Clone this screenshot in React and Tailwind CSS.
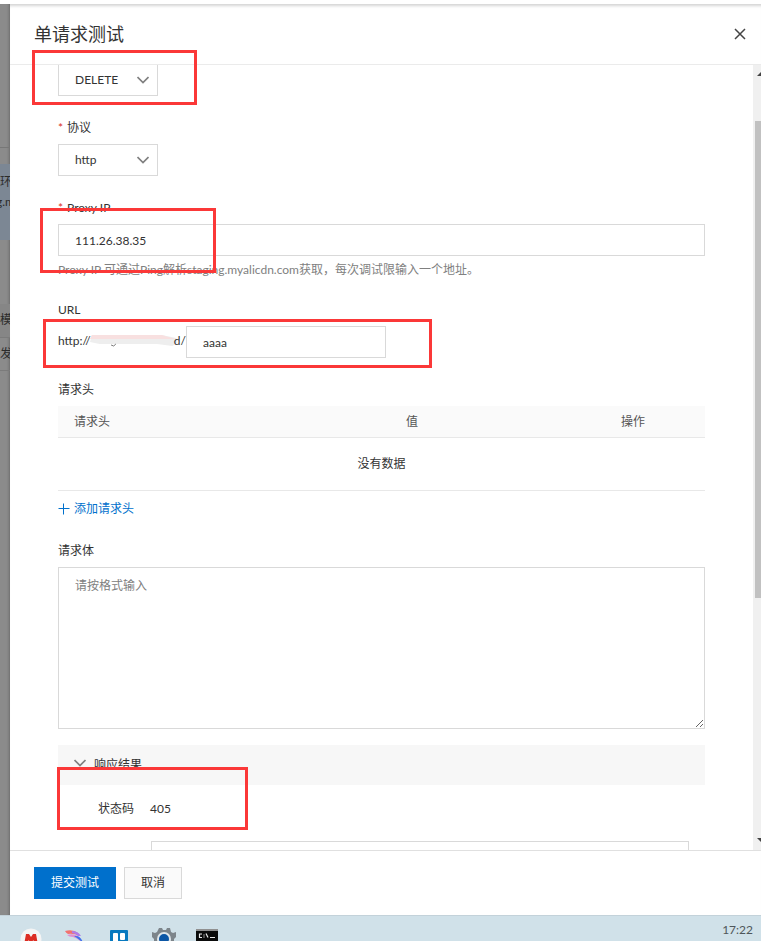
import React from "react";

const FONT = "font-['Lato','Noto_Sans_CJK_SC',sans-serif]";

function Chevron({ className }) {
  return (
    <svg viewBox="0 0 12 8" className={className} fill="none" stroke="#808080" strokeWidth="1.7" aria-hidden="true">
      <path d="M0.5 1 L6 6.5 L11.5 1" />
    </svg>
  );
}

function Label({ htmlFor, required, children }) {
  return (
    <label htmlFor={htmlFor} className="block h-8 leading-8">
      {required && <span className="mr-1 text-[#d93026]">*</span>}
      {children}
    </label>
  );
}

function Select({ id, label, options, className }) {
  return (
    <div className="relative w-[100px]">
      <select
        id={id}
        aria-label={label}
        className={`block w-full appearance-none border-[#d9d9d9] bg-white pl-4 pr-6 outline-none ${className}`}
      >
        {options.map((o) => (
          <option key={o}>{o}</option>
        ))}
      </select>
      <Chevron className="pointer-events-none absolute right-[9px] bottom-3 h-2 w-3" />
    </div>
  );
}

function Backdrop() {
  return (
    <div className="flex w-[10px] shrink-0 flex-col overflow-hidden bg-[#8b8b8b] whitespace-nowrap text-[#2b2b2b] shadow-[inset_-3px_0_3px_-2px_#6b6b6b]">
      <div className="h-36 shrink-0 border-b border-[#777777]" />
      <div className="mt-4 h-[76px] shrink-0 bg-[#7c8794] pt-2">
        <div className="h-5 leading-5">环</div>
        <div className="-ml-1 h-5 leading-5">g.m</div>
      </div>
      <div className="mt-16 h-[34px] shrink-0 border-b border-[#7b7b7b] bg-[#868686] leading-8">模</div>
      <div className="h-[33px] shrink-0 border-b border-[#7b7b7b] leading-8">发</div>
    </div>
  );
}

function Taskbar() {
  return (
    <footer className="flex h-[26px] shrink-0 items-start justify-between overflow-hidden border-t border-[#c3d2da] bg-[#d0e1e9] pr-2 pl-5">
      <div className="flex gap-[22px] pt-3">
        <svg width="22" height="22" viewBox="0 0 22 22" aria-hidden="true">
          <circle cx="11" cy="11" r="10.5" fill="#f4f4f4" />
          <path d="M4 17 L6 6 H9 L11 9 L13 6 H16 L18 17 H14 L13.500 12 L11 15 L8.500 12 L8 17Z" fill="#dc2c22" />
        </svg>
        <svg width="22" height="22" viewBox="0 0 22 22" aria-hidden="true">
          <path d="M1 3 Q9 1 14 5 L16 8 Q9 5 4 6 Q2 5 1 3Z" fill="#f2726f" />
          <path d="M8 3 Q14 3 17 8 L14 8 Q11 5 8 5Z" fill="#b07be8" />
          <path d="M3 7 Q9 5 14 8 Q18 11 18 15 Q14 10 9 9 Q5 9 3 7Z" fill="#e08fd0" />
          <path d="M10 8 Q17 7 19 15 Q15 11 10 8Z" fill="#3c73ee" />
        </svg>
        <svg width="22" height="22" viewBox="0 0 22 22" aria-hidden="true">
          <rect x="2" y="2" width="18" height="20" rx="1" fill="#0879bf" />
          <rect x="5" y="5" width="5" height="14" rx="1" fill="#fff" />
          <rect x="12" y="5" width="5" height="7" rx="1" fill="#fff" />
        </svg>
        <svg width="24" height="22" viewBox="0 0 24 22" aria-hidden="true">
          <path
            d="M7 0h3l1 2h3l1-2h3l1 4 2 1 3-1 1 4-3 3v5l3 3H-1l3-3v-5L-1 8l1-4 3 1 2-1z"
            fill="#7d858b"
          />
          <circle cx="12" cy="11" r="6" fill="#0c56a5" stroke="#dfe6ea" strokeWidth="2" />
        </svg>
        <svg width="22" height="22" viewBox="0 0 22 22" className="-ml-[2px]" aria-hidden="true">
          <rect width="22" height="20" y="1" fill="#0b0b0b" />
          <rect width="22" height="2" y="1" fill="#909090" />
          <path
            d="M6 6H3.500V9.500H6M8 6.500V7.500M8 8.500V9.500M10 5.500L12 9.500M14 9.500H19"
            fill="none"
            stroke="#e8e8e8"
            strokeWidth="1.200"
          />
        </svg>
      </div>
      <time className="pt-1 leading-5 text-[#4f565a]">17:22</time>
    </footer>
  );
}

function Marks() {
  const base = "pointer-events-none absolute border-3 border-[#fb3838]";
  return (
    <>
      <div className={`${base} top-[50px] left-8 h-[55px] w-[165px]`} />
      <div className={`${base} top-[208px] left-10 h-[65px] w-44`} />
      <div className={`${base} top-[319px] left-[43px] h-[49px] w-[389px]`} />
      <div className={`${base} top-[767px] left-[57px] h-[63px] w-[191px]`} />
    </>
  );
}

export default function App() {
  return (
    <div className={`relative flex h-screen flex-col overflow-hidden bg-white text-[12px] text-[#333333] ${FONT}`}>
      <div className="h-1 shrink-0 bg-white" />
      <div className="flex min-h-0 flex-1">
        <Backdrop />
        <section className="flex min-w-0 flex-1 flex-col bg-white shadow-[inset_0_4px_3px_-2px_#d5d5d5]">
          <header className="flex h-[61px] shrink-0 items-center justify-between border-b border-[#ebebeb] pr-[13px] pl-6">
            <h1 className="text-[18px] leading-6">单请求测试</h1>
            <button type="button" aria-label="关闭" className="flex h-4 w-4 items-center justify-center">
              <svg width="12" height="12" viewBox="0 0 12 12" fill="none" stroke="#444444" strokeWidth="1.500" aria-hidden="true">
                <path d="M1 1 L11 11 M11 1 L1 11" />
              </svg>
            </button>
          </header>

          <div className="flex min-h-0 flex-1">
            <form className="min-w-0 flex-1 overflow-hidden px-12">
              <Select id="method" label="请求方法" options={["DELETE", "GET", "POST"]} className="h-[31px] border-x border-b" />

              <div className="mt-4">
                <Label htmlFor="protocol" required>协议</Label>
                <Select id="protocol" options={["http", "https"]} className="h-8 border" />
              </div>

              <div className="mt-4">
                <Label htmlFor="proxy" required>Proxy IP</Label>
                <input id="proxy" defaultValue="111.26.38.35" className="block h-8 w-full border border-[#d9d9d9] px-4 outline-none" />
                <p className="mt-1 leading-5 text-[#808080]">
                  Proxy IP 可通过Ping解析staging.myalicdn.com获取，每次调试限输入一个地址。
                </p>
              </div>

              <div className="mt-[14px]">
                <Label htmlFor="url">URL</Label>
                <div className="flex">
                  <div className="flex h-8 w-32 justify-between leading-[30px]">
                    <span>http://</span>
                    <svg viewBox="0 0 92 14" className="-mr-1 -ml-px mt-2 h-[14px] min-w-0 flex-1" preserveAspectRatio="none" aria-hidden="true">
                      <path d="M2 1 H75 L90 4 L91 9 L86 12 L70 10 H10 L0 8Z" fill="#eeeeee" />
                      <path d="M2 1 H75 L89 5 H0Z" fill="#f8e0e0" />
                      <path d="M22 11 Q25 13.500 27 10" fill="none" stroke="#777777" />
                    </svg>
                    <span>d/</span>
                  </div>
                  <input id="url" defaultValue="aaaa" className="h-8 w-[200px] border border-[#d9d9d9] px-4 outline-none" />
                </div>
              </div>

              <div className="mt-4">
                <h2 className="h-8 leading-8">请求头</h2>
                <table className="w-full table-fixed border-separate border-spacing-0">
                  <thead className="bg-[#fafafa] text-left text-[#555555]">
                    <tr>
                      <th className="h-8 w-[332px] border-b border-[#e8e8e8] px-4 py-0 font-normal">请求头</th>
                      <th className="border-b border-[#e8e8e8] px-4 py-0 font-normal">值</th>
                      <th className="w-[100px] border-b border-[#e8e8e8] px-4 py-0 font-normal">操作</th>
                    </tr>
                  </thead>
                  <tbody>
                    <tr>
                      <td colSpan={3} className="h-[53px] border-b border-[#e8e8e8] p-0 text-center">没有数据</td>
                    </tr>
                  </tbody>
                </table>
                <button type="button" className="mt-2 flex h-5 items-center gap-1 leading-5 text-[#0070cc]">
                  <svg width="12" height="12" viewBox="0 0 12 12" stroke="currentColor" aria-hidden="true">
                    <path d="M0.500 5.500 H11.500 M5.500 0.500 V11.500" />
                  </svg>
                  添加请求头
                </button>
              </div>

              <div className="mt-4">
                <Label htmlFor="body">请求体</Label>
                <textarea
                  id="body"
                  placeholder="请按格式输入"
                  className="block h-[162px] w-full resize border border-[#d9d9d9] px-4 py-2 leading-5 outline-none placeholder:text-[#808080]"
                />
              </div>

              <section className="mt-4">
                <button type="button" className="flex h-10 w-full items-center gap-2 bg-[#f7f7f7] pl-4 text-left">
                  <Chevron className="mb-1 h-2 w-3" />
                  <span>响应结果</span>
                </button>
                <dl className="mt-[14px] flex gap-4 pl-10 leading-5">
                  <dt>状态码</dt>
                  <dd>405</dd>
                </dl>
                <div className="mt-[22px] mr-4 ml-[93px] h-32 border border-[#d9d9d9]" />
              </section>
            </form>

            <div className="flex w-2 shrink-0 flex-col overflow-hidden bg-[#f0f0f0] pl-[2px]" aria-hidden="true">
              <svg width="12" height="56" viewBox="0 0 12 56" className="shrink-0">
                <path d="M2 11 L6 7 L10 11Z" fill="#444444" />
              </svg>
              <div className="h-[477px] shrink-0 bg-[#c1c1c1]" />
              <svg width="12" height="10" viewBox="0 0 12 10" className="mt-auto mb-1 shrink-0">
                <path d="M2 2 L6 6 L10 2Z" fill="#444444" />
              </svg>
            </div>
          </div>

          <div className="flex h-[65px] shrink-0 items-center gap-2 border-t border-[#e0e0e0] px-6">
            <button type="button" className="h-8 bg-[#0070cc] px-[17px] text-white">提交测试</button>
            <button type="button" className="h-8 border border-[#d9d9d9] bg-[#fafafa] px-4">取消</button>
          </div>
        </section>
      </div>
      <Taskbar />
      <Marks />
    </div>
  );
}
